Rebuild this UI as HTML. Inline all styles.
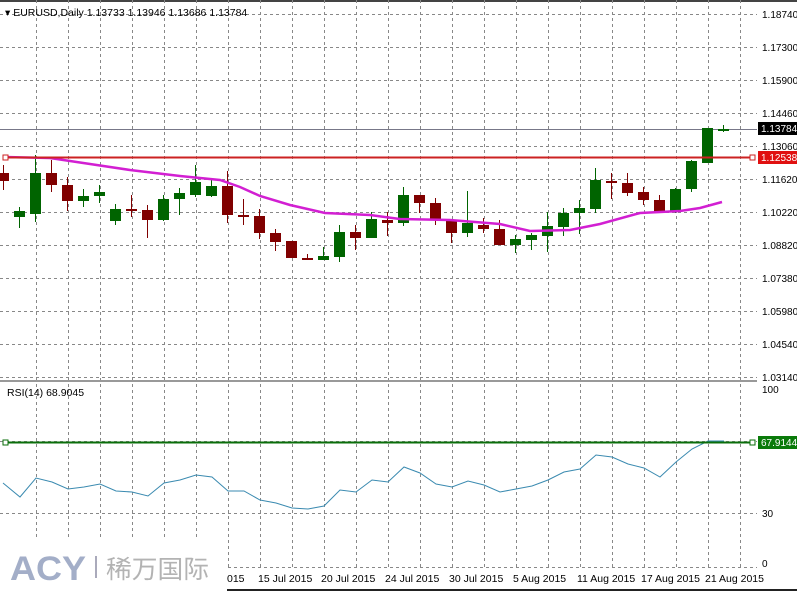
<!DOCTYPE html><html><head><style>body{margin:0;background:#fff}svg{display:block;font-family:"Liberation Sans",sans-serif}</style></head><body>
<svg width="797" height="591" viewBox="0 0 797 591" xmlns="http://www.w3.org/2000/svg">
<rect width="797" height="591" fill="#fff"/>
<rect x="0" y="0" width="797" height="2" fill="#444"/>
<g stroke="#888" stroke-dasharray="3,3" stroke-width="1">
<path d="M0 14.5H757M0 47.5H757M0 80.5H757M0 113.5H757M0 146.5H757M0 179.5H757M0 212.5H757M0 245.5H757M0 278.5H757M0 311.5H757M0 344.5H757M0 377.5H757M0 441.5H757M0 513.5H757M0 567.5H757"/>
<path d="M36.5 0V568M68.5 0V568M100.5 0V568M132.5 0V568M164.5 0V568M196.5 0V568M228.5 0V568M260.5 0V568M292.5 0V568M324.5 0V568M356.5 0V568M388.5 0V568M420.5 0V568M452.5 0V568M484.5 0V568M516.5 0V568M548.5 0V568M580.5 0V568M612.5 0V568M644.5 0V568M676.5 0V568M708.5 0V568M740.5 0V568"/>
</g>
<rect x="0" y="380" width="757" height="2" fill="#999"/>
<line x1="0" y1="129.5" x2="757" y2="129.5" stroke="#778" stroke-width="1"/>
<g font-size="10" fill="#000">
<text x="762" y="18">1.18740</text><text x="762" y="51">1.17300</text><text x="762" y="84">1.15900</text><text x="762" y="117">1.14460</text><text x="762" y="150">1.13060</text><text x="762" y="183">1.11620</text><text x="762" y="216">1.10220</text><text x="762" y="249">1.08820</text><text x="762" y="282">1.07380</text><text x="762" y="315">1.05980</text><text x="762" y="348">1.04540</text><text x="762" y="381">1.03140</text>
<text x="762" y="393">100</text><text x="762" y="517">30</text><text x="762" y="567">0</text>
</g>
<g stroke="#800000" stroke-width="1">
<path d="M3.5 165V190M51.5 160V192M67.5 177V211M131.5 195V217M147.5 205V238M227.5 171V223M243.5 199V225M259.5 209V239M275.5 229V251M291.5 241V258M307.5 254V260M355.5 225V250M387.5 212V236M419.5 195V213M435.5 198V225M451.5 220V243M483.5 218V233M499.5 220V245M611.5 173V199M627.5 173V196M643.5 187V205M659.5 195V213"/>
</g>
<g fill="#800000">
<rect x="-2" y="173" width="11" height="8"/><rect x="46" y="173" width="11" height="12"/><rect x="62" y="185" width="11" height="16"/><rect x="126" y="209" width="11" height="2"/><rect x="142" y="210" width="11" height="10"/><rect x="222" y="186" width="11" height="29"/><rect x="238" y="215" width="11" height="2"/><rect x="254" y="216" width="11" height="17"/><rect x="270" y="233" width="11" height="9"/><rect x="286" y="241" width="11" height="17"/><rect x="302" y="258" width="11" height="2"/><rect x="350" y="232" width="11" height="6"/><rect x="382" y="220" width="11" height="3"/><rect x="414" y="195" width="11" height="8"/><rect x="430" y="203" width="11" height="17"/><rect x="446" y="220" width="11" height="13"/><rect x="478" y="225" width="11" height="4"/><rect x="494" y="229" width="11" height="16"/><rect x="606" y="181" width="11" height="2"/><rect x="622" y="183" width="11" height="10"/><rect x="638" y="192" width="11" height="8"/><rect x="654" y="200" width="11" height="12"/>
</g>
<g stroke="#006400" stroke-width="1">
<path d="M19.5 207V228M35.5 155V222M83.5 189V207M99.5 185V203M115.5 204V225M163.5 195V221M179.5 188V215M195.5 165V197M211.5 179V197M323.5 247V260M339.5 225V262M371.5 212V238M403.5 187V226M467.5 191V237M515.5 235V253M531.5 233V250M547.5 212V252M563.5 208V236M579.5 200V234M595.5 168V213M675.5 188V213M691.5 160V192M707.5 128V163M723.5 125V132"/>
</g>
<g fill="#006400">
<rect x="14" y="211" width="11" height="6"/><rect x="30" y="173" width="11" height="41"/><rect x="78" y="196" width="11" height="5"/><rect x="94" y="192" width="11" height="4"/><rect x="110" y="209" width="11" height="12"/><rect x="158" y="199" width="11" height="21"/><rect x="174" y="193" width="11" height="6"/><rect x="190" y="182" width="11" height="13"/><rect x="206" y="186" width="11" height="10"/><rect x="318" y="256" width="11" height="4"/><rect x="334" y="232" width="11" height="25"/><rect x="366" y="219" width="11" height="19"/><rect x="398" y="195" width="11" height="28"/><rect x="462" y="223" width="11" height="10"/><rect x="510" y="239" width="11" height="6"/><rect x="526" y="235" width="11" height="5"/><rect x="542" y="226" width="11" height="10"/><rect x="558" y="213" width="11" height="14"/><rect x="574" y="208" width="11" height="5"/><rect x="590" y="180" width="11" height="29"/><rect x="670" y="189" width="11" height="23"/><rect x="686" y="161" width="11" height="28"/><rect x="702" y="128" width="11" height="35"/><rect x="718" y="129" width="11" height="2"/>
</g>
<polyline fill="none" stroke="#d21fd2" stroke-width="2.5" points="4,157 50,158 90,164 130,170 180,176 220,180 240,187 260,196 290,205 325,213 370,215 400,219 450,220 500,224 530,231 570,230 600,224 640,213 680,211 700,208 722,202"/>
<line x1="5" y1="157.5" x2="752" y2="157.5" stroke="#cc2222" stroke-width="2"/>
<rect x="3" y="155" width="5" height="5" fill="#fff" stroke="#cc2222"/>
<rect x="750" y="155" width="5" height="5" fill="#fff" stroke="#cc2222"/>
<rect x="758" y="151" width="39" height="13" fill="#e01010"/>
<text x="761" y="161" font-size="10" fill="#fff">1.12538</text>
<rect x="758" y="122" width="39" height="13" fill="#000"/>
<text x="761" y="132" font-size="10" fill="#fff">1.13784</text>
<polyline fill="none" stroke="#3a8ab0" stroke-width="1" points="3,483 20,497 36,478 52,482 68,489 84,487 100,484 116,491 132,492 148,496 164,483 180,480 196,475 212,477 228,491 244,491 260,500 276,503 292,508 308,509 324,506 340,490 356,492 372,480 388,482 404,467 420,473 436,484 452,487 468,481 484,485 500,492 516,489 532,486 548,480 564,472 580,469 596,455 612,457 628,464 644,468 660,477 676,462 692,449 708,441 724,441"/>
<line x1="5" y1="442.5" x2="752" y2="442.5" stroke="#0a6e0a" stroke-width="2"/>
<rect x="3" y="440" width="5" height="5" fill="#fff" stroke="#0a6e0a"/>
<rect x="750" y="440" width="5" height="5" fill="#fff" stroke="#0a6e0a"/>
<rect x="758" y="436" width="39" height="13" fill="#0a7a0a"/>
<text x="761" y="446" font-size="10" fill="#fff">67.9144</text>
<text x="5" y="16" font-size="10.5" fill="#000">▾ EURUSD,Daily  1.13733 1.13946 1.13686 1.13784</text>
<text x="7" y="396" font-size="10.5" fill="#000">RSI(14) 68.9045</text>
<rect x="0" y="569" width="797" height="22" fill="#fff"/>
<g font-size="10.5" fill="#000">
<text x="227" y="582">015</text><text x="258" y="582">15 Jul 2015</text><text x="321" y="582">20 Jul 2015</text><text x="385" y="582">24 Jul 2015</text><text x="449" y="582">30 Jul 2015</text><text x="513" y="582">5 Aug 2015</text><text x="577" y="582">11 Aug 2015</text><text x="641" y="582">17 Aug 2015</text><text x="705" y="582">21 Aug 2015</text>
</g>
<rect x="227" y="589" width="570" height="2" fill="#222"/>
<rect x="0" y="540" width="226" height="51" fill="#fff"/>
<text x="10" y="580" font-size="34" font-weight="bold" fill="#a3aec8" textLength="76" lengthAdjust="spacingAndGlyphs">ACY</text>
<rect x="95" y="556" width="2" height="22" fill="#aab"/>
<text x="106" y="578" font-size="25" fill="#b3b3b3" font-family="'Noto Sans CJK SC',sans-serif" textLength="103" lengthAdjust="spacingAndGlyphs">稀万国际</text>
</svg>
</body></html>
